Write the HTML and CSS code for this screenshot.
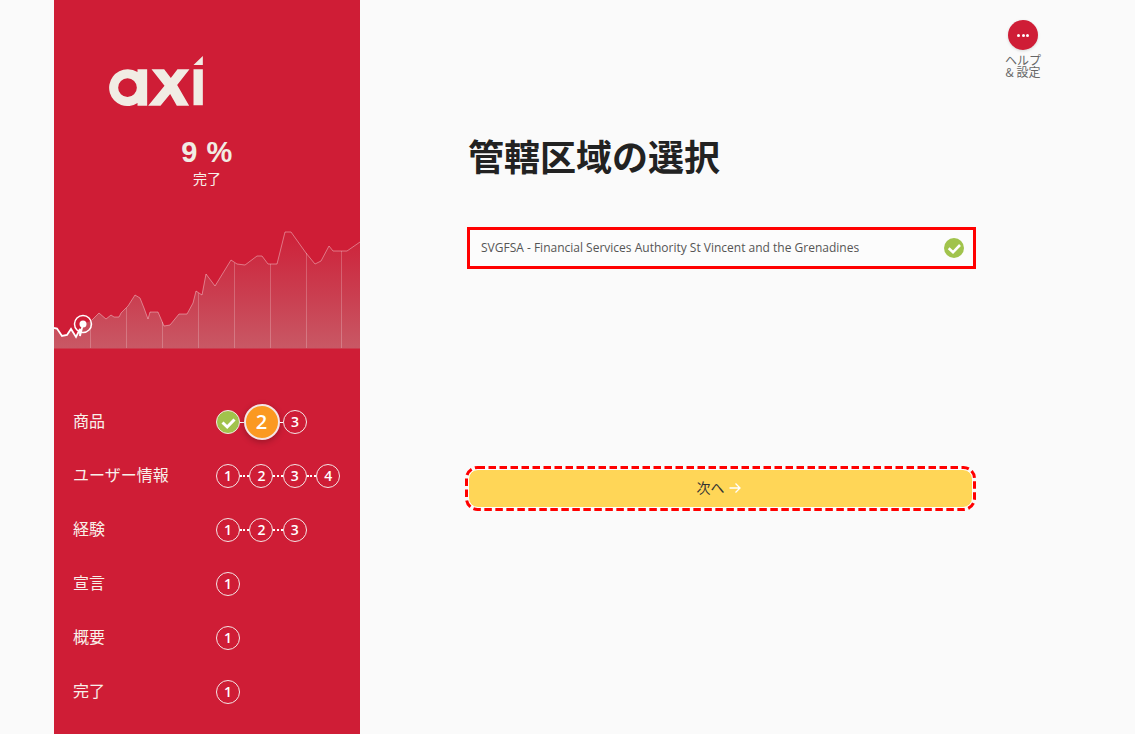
FILE: index.html
```
<!DOCTYPE html>
<html lang="ja">
<head>
<meta charset="utf-8">
<title>管轄区域の選択</title>
<link rel="stylesheet" href="styles.css">
</head>
<body>
<div class="page">
  <aside class="sidebar">
    <svg class="logo" viewBox="165 78 281 150" aria-label="axi">
      <path fill-rule="evenodd" d="M220 118a55 55 0 1 0 30 101v8h29V118h-29v8a55 55 0 0 0-30-8zm0 27a28 28 0 1 1 0 56 28 28 0 0 1 0-56z"/>
      <path d="M292 118h38l20 26 20-26h36l-37 47 36 62h-37l-20-35-29 35h-37l49-60z"/>
      <path d="M418 118h28v108h-28zM418 105l28-27v27z"/>
    </svg>
    <div class="percent">9 %</div>
    <div class="percent-label">完了</div>
    <svg class="chart" viewBox="0 0 306 129">
      <defs>
        <linearGradient id="area" x1="0" y1="0" x2="0" y2="1">
          <stop offset="0" stop-color="#b6a19c" stop-opacity="0.03"/>
          <stop offset="1" stop-color="#c0aaa6" stop-opacity="0.42"/>
        </linearGradient>
      </defs>
      <path fill="url(#area)" d="M0 108L3 109L8 117L13 115L17 109L22 117L26 109L30 104L38 100L45 93L52 99L57 95L60 97L65 97L67 93L74 86L81 75L86 78L90 88L94 99L96 92L104 92L110 106L116 105L125 94L133 94L139 83L142 71L148 75L152 54L161 66L177 40L183 44L191 45L203 36L208 36L214 44L223 44L231 12L237 12L252 33L261 44L267 41L275 26L279 31L293 31L306 22V128.500H0Z"/>
      <path class="grid" d="M36.500 101V128M72.500 88V128M108.500 102V128M144.500 73V128M180.500 43V128M216.500 44V128M252.500 33V128M287.500 31V128"/>
      <path class="line" d="M38 100L45 93L52 99L57 95L60 97L65 97L67 93L74 86L81 75L86 78L90 88L94 99L96 92L104 92L110 106L116 105L125 94L133 94L139 83L142 71L148 75L152 54L161 66L177 40L183 44L191 45L203 36L208 36L214 44L223 44L231 12L237 12L252 33L261 44L267 41L275 26L279 31L293 31L306 22"/>
      <path class="line-past" d="M0 108L3 108.500L8 116L13 115L17 109L22 117L26 109L26 116L29 104"/>
      <circle class="ring" cx="29" cy="104" r="8.500"/>
      <circle class="dot" cx="29" cy="104" r="3.500"/>
    </svg>
    <nav class="nav">
      <div class="row">
        <span class="label">商品</span>
        <div class="steps tight">
          <span class="step done"><svg viewBox="0 0 24 24"><path d="M6.500 12.500l4.700 4.500L18.500 9.500"/></svg></span>
          <i class="link solid"></i>
          <span class="step active">2</span>
          <i class="link solid"></i>
          <span class="step">3</span>
        </div>
      </div>
      <div class="row">
        <span class="label">ユーザー情報</span>
        <div class="steps">
          <span class="step">1</span><i class="link"></i><span class="step">2</span><i class="link"></i><span class="step">3</span><i class="link"></i><span class="step">4</span>
        </div>
      </div>
      <div class="row">
        <span class="label">経験</span>
        <div class="steps">
          <span class="step">1</span><i class="link"></i><span class="step">2</span><i class="link"></i><span class="step">3</span>
        </div>
      </div>
      <div class="row">
        <span class="label">宣言</span>
        <div class="steps"><span class="step">1</span></div>
      </div>
      <div class="row">
        <span class="label">概要</span>
        <div class="steps"><span class="step">1</span></div>
      </div>
      <div class="row">
        <span class="label">完了</span>
        <div class="steps"><span class="step">1</span></div>
      </div>
    </nav>
  </aside>
  <main class="main">
    <div class="help">
      <span class="help-btn"><i></i><i></i><i></i></span>
      <span class="help-text">ヘルプ<br>&amp; 設定</span>
    </div>
    <h1 class="title">管轄区域の選択</h1>
    <div class="option">
      <span class="option-text">SVGFSA - Financial Services Authority St Vincent and the Grenadines</span>
      <span class="check"><svg viewBox="0 0 20 20"><path d="M4.700 10.300L9 14.300L16 7"/></svg></span>
    </div>
    <div class="next-wrap">
      <button class="next" type="button">次へ
        <svg viewBox="0 0 12 12"><path d="M0.500 6h10.500M6.500 1.500L11 6l-4.500 4.500"/></svg>
      </button>
      <svg class="next-outline" viewBox="0 0 511 45"><rect x="1.500" y="1.500" width="508" height="42" rx="11" ry="11"/></svg>
    </div>
  </main>
</div>
</body>
</html>
```
FILE: styles.css
```
* { box-sizing: border-box; }
html, body { margin: 0; height: 100%; }
body {
  background: #fafafa;
  overflow: hidden;
  font-family: "Noto Sans CJK JP", "Open Sans", sans-serif;
}
.page { display: flex; height: 734px; padding-left: 54px; }

.sidebar {
  width: 306px;
  background: #cf1d36;
  color: #fff;
  padding-top: 56px;
  display: flex;
  flex-direction: column;
}
.logo { display: block; width: 94px; height: 50px; margin-left: 55px; fill: #f1ece4; }
.percent {
  margin-top: 30px;
  text-align: center;
  font: 700 29px/32px "Liberation Sans", Arial, sans-serif;
  letter-spacing: 0.5px;
  color: #f1ece4;
}
.percent-label { margin-top: 1px; text-align: center; font-size: 14px; line-height: 18px; color: #f8f0ea; }
.chart { display: block; width: 306px; height: 129px; margin-top: 33px; }
.grid { stroke: #fff; stroke-opacity: 0.22; stroke-width: 1; fill: none; }
.line { stroke: #fff; stroke-opacity: 0.38; stroke-width: 1; fill: none; }
.line-past { stroke: #fff; stroke-width: 1.8; fill: none; }
.ring { fill: none; stroke: #fff; stroke-width: 1.5; }
.dot { fill: #fff; }

.nav { margin-top: 46px; }
.row { display: flex; align-items: center; height: 54px; padding-left: 19px; }
.label { width: 143px; padding-bottom: 4px; font-size: 16px; line-height: 24px; color: #f8f0ea; }
.steps { display: flex; align-items: center; }
.step {
  flex: none;
  width: 24px;
  height: 24px;
  border: 1.2px solid #f4e6e6;
  border-radius: 50%;
  display: flex;
  align-items: center;
  justify-content: center;
  font: 600 14px/1 "Open Sans", sans-serif;
  color: #fff;
}
.link { flex: none; width: 9.4px; border-top: 2px dotted #fff; }
.link.solid { width: 3.5px; border-top-style: solid; border-top-width: 1.5px; }
.step.done { background: #a1c34c; }
.step.done svg { width: 24px; height: 24px; flex: none; fill: none; stroke: #fff; stroke-width: 3; }
.step.active {
  width: 36px;
  height: 36px;
  background: #fb9921;
  border-width: 2px;
  font-size: 20px;
  box-shadow: 0 2px 6px rgba(0, 0, 0, 0.25);
}

.main { flex: 1; padding: 20px 94px 0 107px; display: flex; flex-direction: column; }
.help { align-self: flex-end; width: 36px; display: flex; flex-direction: column; align-items: center; }
.help-btn {
  width: 30px;
  height: 30px;
  border-radius: 50%;
  background: #cf1d36;
  box-shadow: 0 1px 3px rgba(0, 0, 0, 0.15);
  display: flex;
  align-items: center;
  justify-content: center;
  gap: 1.5px;
}
.help-btn i { width: 3px; height: 3px; border-radius: 50%; background: #fff; }
.help-text {
  margin-top: 4px;
  white-space: nowrap;
  text-align: center;
  font-size: 12px;
  line-height: 12px;
  color: #666;
}
.title {
  width: 509px;
  margin: 52px 0 0 1px;
  font-size: 36px;
  line-height: 50px;
  font-weight: 700;
  color: #222;
}
.option {
  width: 509px;
  height: 42px;
  margin-top: 47px;
  border: 3px solid #f00;
  background: #fcfcfc;
  padding: 0 9px 0 11px;
  display: flex;
  align-items: center;
  justify-content: space-between;
}
.option-text { font: 400 12px/16px "Open Sans", sans-serif; color: #555; }
.check { width: 20px; height: 20px; border-radius: 50%; background: #a1c34c; }
.check svg { display: block; width: 20px; height: 20px; fill: none; stroke: #fff; stroke-width: 2.6; }
.next-wrap {
  position: relative;
  width: 511px;
  height: 45px;
  margin-top: 197px;
  margin-left: -2px;
  padding: 3px;
  background: #fff;
  background-clip: content-box;
  border-radius: 13px;
}
.next {
  display: flex;
  align-items: center;
  justify-content: center;
  gap: 4px;
  width: 100%;
  height: 100%;
  border: 1px solid #fff;
  border-radius: 10px;
  padding: 0 4px 3px 0;
  background: #ffd657;
  font: 400 14px/20px "Noto Sans CJK JP", sans-serif;
  color: #333;
}
.next svg { width: 12px; height: 12px; margin-top: 2px; fill: none; stroke: #fff; stroke-width: 1.3; }
.next-outline { position: absolute; inset: 0; width: 511px; height: 45px; pointer-events: none; }
.next-outline rect { fill: none; stroke: #f00; stroke-width: 3; stroke-dasharray: 7.5 3.5; }
```
